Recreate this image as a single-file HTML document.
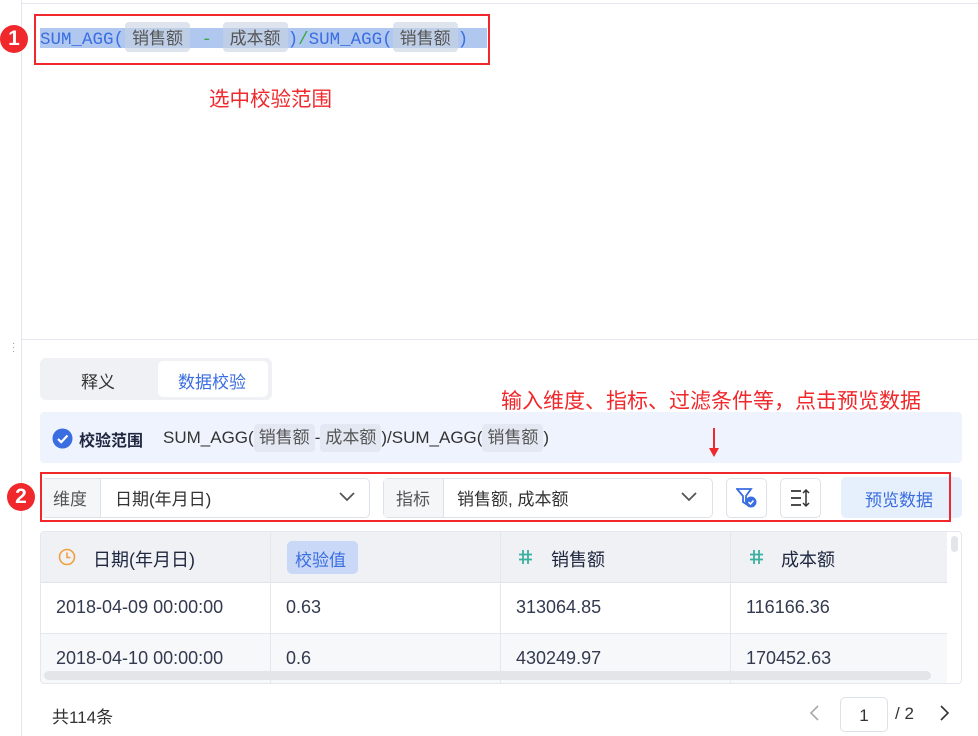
<!DOCTYPE html>
<html><head><meta charset="utf-8"><style>
*{margin:0;padding:0;box-sizing:border-box}
body{width:978px;height:736px;background:#fff;position:relative;overflow:hidden;font-family:"Liberation Sans","Noto Sans CJK SC",sans-serif;color:#1f2740}
.a{position:absolute}
.mono{font-family:"Liberation Mono","Noto Sans CJK SC",monospace}
.chip{background:#e3e8f2;border-radius:4px;padding:0 6px;color:#555;display:inline-block}
.red{color:#f0272b}
.circ{width:28px;height:28px;border-radius:50%;background:#f0272b;color:#fff;font-weight:bold;font-size:21px;text-align:center;line-height:28px}
.cell{position:absolute;font-size:18px;color:#333a4f}
</style></head><body>
<div class="a" style="left:21px;top:0;width:1px;height:736px;background:#e4e7ee"></div>
<div class="a" style="left:22px;top:3px;width:956px;height:1px;background:#e4e7ee"></div>
<div class="a" style="left:22px;top:339px;width:956px;height:1px;background:#e4e7ee"></div>
<div class="a" style="left:12px;top:342px;font-size:10px;color:#999;line-height:4px">·<br>·<br>·</div>

<div class="a" style="left:34px;top:14px;width:456px;height:51px;border:2px solid #f0272b"></div>
<div class="a circ" style="left:0;top:25px">1</div>
<div class="a" style="left:40px;top:28px;height:20px;width:447px;background:#b0c8f0"></div>
<div class="a mono" style="left:40px;top:22px;height:30px;width:460px;font-size:17.5px;line-height:30px;color:#3a6de0;white-space:nowrap">SUM_AGG(<span class="chip" style="background:rgba(200,210,225,0.6);font-family:'Noto Sans CJK SC',sans-serif;font-size:17px;line-height:30px;padding:0 7px;margin:0 1px">销售额</span> <span style="color:#3aa845">-</span> <span class="chip" style="background:rgba(200,210,225,0.6);font-family:'Noto Sans CJK SC',sans-serif;font-size:17px;line-height:30px;padding:0 7px">成本额</span>)<span style="color:#3aa845">/</span>SUM_AGG(<span class="chip" style="background:rgba(200,210,225,0.6);font-family:'Noto Sans CJK SC',sans-serif;font-size:17px;line-height:30px;padding:0 7px">销售额</span>)</div>
<div class="a red" style="left:209px;top:82px;font-size:20.5px">选中校验范围</div>

<div class="a" style="left:40px;top:358px;width:232px;height:42px;background:#f0f1f4;border-radius:6px"></div>
<div class="a" style="left:158px;top:361px;width:110px;height:36px;background:#fff;border-radius:5px"></div>
<div class="a" style="left:81px;top:368px;font-size:17px;color:#333">释义</div>
<div class="a" style="left:178px;top:368px;font-size:17px;color:#3a6de0">数据校验</div>

<div class="a red" style="left:501px;top:385px;font-size:21px;white-space:nowrap">输入维度、指标、过滤条件等，点击预览数据</div>

<div class="a" style="left:40px;top:412px;width:922px;height:51px;background:#eef3fd;border-radius:4px"></div>
<svg class="a" style="left:52px;top:428px" width="21" height="21"><circle cx="10.5" cy="10.5" r="10" fill="#3a6de0"/><path d="M6 11l3.2 3.2L15.5 7.5" stroke="#fff" stroke-width="2.2" fill="none"/></svg>
<div class="a" style="left:79px;top:427px;font-size:16px;font-weight:bold;color:#1f2740">校验范围</div>
<div class="a" style="left:163px;top:424px;font-size:17px;line-height:28px;color:#333;white-space:nowrap">SUM_AGG(<span class="chip" style="padding:0 5px">销售额</span>-<span class="chip" style="padding:0 5px">成本额</span>)/SUM_AGG(<span class="chip" style="padding:0 5px">销售额</span>)</div>
<div class="a" style="left:713px;top:428px;width:2px;height:24px;background:#f0272b"></div>
<div class="a" style="left:709px;top:448px;width:0;height:0;border-left:5px solid transparent;border-right:5px solid transparent;border-top:9px solid #f0272b"></div>

<div class="a" style="left:41px;top:478px;width:329px;height:40px;border:1px solid #dde1e8;border-radius:5px;background:#fff"></div>
<div class="a" style="left:42px;top:479px;width:59px;height:38px;background:#f5f6f8;border-right:1px solid #dde1e8"></div>
<div class="a" style="left:53px;top:485px;font-size:17px;color:#555">维度</div>
<div class="a" style="left:115px;top:485px;font-size:17px;color:#333">日期(年月日)</div>
<svg class="a" style="left:338px;top:491px" width="18" height="12"><path d="M2 2l7 7 7-7" stroke="#555" stroke-width="1.8" fill="none"/></svg>
<div class="a" style="left:383px;top:478px;width:330px;height:40px;border:1px solid #dde1e8;border-radius:5px;background:#fff"></div>
<div class="a" style="left:384px;top:479px;width:60px;height:38px;background:#f5f6f8;border-right:1px solid #dde1e8"></div>
<div class="a" style="left:396px;top:485px;font-size:17px;color:#555">指标</div>
<div class="a" style="left:457px;top:485px;font-size:17px;color:#333">销售额, 成本额</div>
<svg class="a" style="left:680px;top:491px" width="18" height="12"><path d="M2 2l7 7 7-7" stroke="#555" stroke-width="1.8" fill="none"/></svg>
<div class="a" style="left:726px;top:478px;width:41px;height:40px;border:1px solid #dde1e8;border-radius:5px"></div>
<svg class="a" style="left:736px;top:487px" width="24" height="24"><path d="M1 2h14l-5 7v8l-3-2V9z" fill="none" stroke="#3a6de0" stroke-width="1.8"/><circle cx="15" cy="15" r="5.5" fill="#3a6de0"/><path d="M12.5 15l2 2 3-3.5" stroke="#fff" stroke-width="1.5" fill="none"/></svg>
<div class="a" style="left:780px;top:478px;width:41px;height:40px;border:1px solid #dde1e8;border-radius:5px"></div>
<svg class="a" style="left:790px;top:488px" width="22" height="20"><path d="M1 3h10M1 10h10M1 17h10" stroke="#333" stroke-width="1.8"/><path d="M16 2v16M13 5l3-3 3 3M13 15l3 3 3-3" stroke="#333" stroke-width="1.5" fill="none"/></svg>
<div class="a" style="left:841px;top:477px;width:121px;height:41px;background:#e6effc;border-radius:5px"></div>
<div class="a" style="left:865px;top:486px;font-size:17px;color:#3a6de0">预览数据</div>
<div class="a" style="left:40px;top:472px;width:911px;height:50px;border:2px solid #f0272b"></div>
<div class="a circ" style="left:7px;top:483px">2</div>

<div class="a" style="left:40px;top:531px;width:922px;height:153px;border:1px solid #e4e7ee;border-radius:4px;overflow:hidden">
 <div class="a" style="left:0;top:0;width:906px;height:51px;background:#f0f1f4;border-bottom:1px solid #e0e3ea"></div>
 <div class="a" style="left:0;top:101px;width:906px;height:52px;background:#f7f8fa;border-top:1px solid #e4e7ee"></div>
 <div class="a" style="left:229px;top:0;width:1px;height:153px;background:#e4e7ee"></div>
 <div class="a" style="left:459px;top:0;width:1px;height:153px;background:#e4e7ee"></div>
 <div class="a" style="left:689px;top:0;width:1px;height:153px;background:#e4e7ee"></div>
 <div class="a" style="left:3px;top:139px;width:887px;height:9px;background:#e4e5e9;border-radius:5px"></div>
 <div class="a" style="left:910px;top:4px;width:7px;height:16px;background:#e4e5e9;border-radius:4px"></div>
</div>
<svg class="a" style="left:58px;top:548px" width="18" height="18"><circle cx="9" cy="9" r="7.5" fill="none" stroke="#f0a040" stroke-width="1.6"/><path d="M9 4.5v5h3.5" stroke="#f0a040" stroke-width="1.6" fill="none"/></svg>
<div class="cell" style="left:93px;top:546px;color:#1f2740">日期(年月日)</div>
<div class="a" style="left:287px;top:541px;width:71px;height:33px;background:#c8d8f6;border-radius:5px"></div>
<div class="a" style="left:295px;top:546px;font-size:17px;color:#3a6de0">校验值</div>
<svg class="a" style="left:518px;top:549px" width="15" height="16"><path d="M5 1v14M10 1v14M1 5.5h13M1 10.5h13" stroke="#3cb0a0" stroke-width="1.8"/></svg>
<div class="cell" style="left:551px;top:546px;color:#1f2740">销售额</div>
<svg class="a" style="left:749px;top:549px" width="15" height="16"><path d="M5 1v14M10 1v14M1 5.5h13M1 10.5h13" stroke="#3cb0a0" stroke-width="1.8"/></svg>
<div class="cell" style="left:781px;top:546px;color:#1f2740">成本额</div>
<div class="cell" style="left:56px;top:597px">2018-04-09 00:00:00</div>
<div class="cell" style="left:286px;top:597px">0.63</div>
<div class="cell" style="left:516px;top:597px">313064.85</div>
<div class="cell" style="left:746px;top:597px">116166.36</div>
<div class="cell" style="left:56px;top:648px">2018-04-10 00:00:00</div>
<div class="cell" style="left:286px;top:648px">0.6</div>
<div class="cell" style="left:516px;top:648px">430249.97</div>
<div class="cell" style="left:746px;top:648px">170452.63</div>

<div class="a" style="left:52px;top:703px;font-size:17px;color:#333">共114条</div>
<svg class="a" style="left:808px;top:704px" width="14" height="18"><path d="M10 2L3 9l7 7" stroke="#aaa" stroke-width="1.6" fill="none"/></svg>
<div class="a" style="left:840px;top:697px;width:48px;height:35px;border:1px solid #dde1e8;border-radius:5px;text-align:center;line-height:35px;font-size:17px;color:#333">1</div>
<div class="a" style="left:895px;top:704px;font-size:17px;color:#333">/ 2</div>
<svg class="a" style="left:937px;top:704px" width="14" height="18"><path d="M4 2l7 7-7 7" stroke="#333" stroke-width="1.6" fill="none"/></svg>
</body></html>
